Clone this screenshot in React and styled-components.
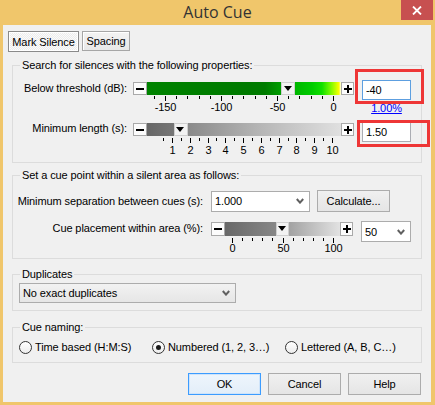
import React from "react"
import styled, { createGlobalStyle } from "styled-components"

const GlobalStyle = createGlobalStyle`
  html, body { margin: 0; padding: 0; }
  body {
    font-family: "Liberation Sans", Arial, sans-serif;
    font-size: 11px;
    letter-spacing: -0.1px;
    color: #000;
    background: #fff;
  }
  * { box-sizing: border-box; }
`

// tick scales under the sliders
const range = (from, to, step) => {
  const out = []
  for (let v = from; v <= to + 1e-9; v += step) out.push(Math.round(v * 100) / 100)
  return out
}

const Scale = ({ width, height, top, baseline, values, isMajor, toX }) => (
  <TickSvg width={width} height={height}>
    {values.map((v) => {
      const x = Math.round(toX(v)) + 0.5
      return (
        <line key={v} x1={x} x2={x} y1={top} y2={top + (isMajor(v) ? 5 : 3)} stroke="#000" />
      )
    })}
    {values.filter(isMajor).map((v) => (
      <text key={"t" + v} x={Math.round(toX(v)) + 0.5} y={baseline} textAnchor="middle">
        {v}
      </text>
    ))}
  </TickSvg>
)

const Slider = ({ width, height, thumbLeft, thumbW, track }) => (
  <SliderBox $w={width} $h={height}>
    <StepBtn $w={14} />
    <Track $bg={track}>
      <Thumb $w={thumbW} style={{ left: thumbLeft }} />
    </Track>
    <StepBtn $w={13} $plus />
  </SliderBox>
)

const Chevron = () => (
  <svg width="8" height="6" viewBox="0 0 8 6">
    <polyline points="0.8,1 4,4.6 7.2,1" fill="none" stroke="#606060" strokeWidth="2" />
  </svg>
)

const Combo = ({ children, w, h, flat }) => (
  <ComboBox $w={w} $h={h} $flat={flat}>
    <span>{children}</span>
    <Chevron />
  </ComboBox>
)

const thrX = (v) => 200 + 1.12 * v
const lenX = (v) => 39 + (v - 1) * 17.78
const cueX = (v) => 21 + 1.01 * v

const App = () => {
  return (
    <>
      <GlobalStyle />
      <Window>
        <TitleBar>
          <span />
          <Title>Auto Cue</Title>
          <Close>
            <svg width="10" height="9" viewBox="0 0 10 9">
              <path d="M1 0.5 L9 8.5 M9 0.5 L1 8.5" stroke="#fff" strokeWidth="1.8" />
            </svg>
          </Close>
        </TitleBar>
        <Client>
          <Tabs>
            <Tab $active $w={71}>Mark Silence</Tab>
            <Tab $w={48}>Spacing</Tab>
          </Tabs>

          <Group $mt={13} $h={98} $pad="14px 0 0 0">
            <Legend>Search for silences with the following properties:</Legend>
            <Row $h={42}>
              <RowLabel $w={114} $mt={2}>Below threshold (dB):</RowLabel>
              <SliderCol $w={221} $ml={6} $mt={2}>
                <Slider
                  width={221}
                  height={13}
                  thumbW={14}
                  thumbLeft={thrX(-40) - 14 - 7}
                  track="linear-gradient(to right, #008300 0px, #007a00 100px, #007c00 118px, #009a00 132px, #00b800 149px, #00cc00 165px, #10e000 175px, #70f800 183px, #c8ff00 189px, #ffff00 192px, #ffffff 194px)"
                />
                <Scale
                  width={221}
                  height={18}
                  top={1}
                  baseline={16}
                  values={range(-160, 0, 10)}
                  isMajor={(v) => v % 50 === 0}
                  toX={thrX}
                />
              </SliderCol>
              <FieldCol $ml={8}>
                <TextBox $focus defaultValue="-40" readOnly />
                <Link href="#">1.00%</Link>
                <Mark $l={-7} $t={-11} $w={69} $h={35} />
              </FieldCol>
            </Row>
            <Row>
              <RowLabel $w={114} $mt={0}>Minimum length (s):</RowLabel>
              <SliderCol $w={221} $ml={6} $mt={1}>
                <Slider
                  width={221}
                  height={13}
                  thumbW={14}
                  thumbLeft={lenX(1.5) - 14 - 7}
                  track="linear-gradient(to right, #666666 0px, #767676 27px, #8a8a8a 41px, #b4b4b4 110px, #e0e0e0 194px)"
                />
                <Scale
                  width={221}
                  height={20}
                  top={2}
                  baseline={18}
                  values={range(0.5, 10, 0.5)}
                  isMajor={(v) => Number.isInteger(v)}
                  toX={lenX}
                />
              </SliderCol>
              <FieldCol $ml={8}>
                <TextBox defaultValue="1.50" readOnly />
                <Mark $l={-5} $t={-2} $w={73} $h={27} />
              </FieldCol>
            </Row>
          </Group>

          <Group $mt={12} $h={84} $pad="14px 0 0 0">
            <Legend>Set a cue point within a silent area as follows:</Legend>
            <Row $h={22} $center>
              <RowLabel $w={190}>Minimum separation between cues (s):</RowLabel>
              <Spacer $w={8} />
              <Combo w={99} h={21}>1.000</Combo>
              <Spacer $w={7} />
              <Button $w={73}>Calculate...</Button>
            </Row>
            <Row $mt={9}>
              <RowLabel $w={190} $mt={1}>Cue placement within area (%):</RowLabel>
              <SliderCol $w={142} $ml={8} $mt={1}>
                <Slider
                  width={142}
                  height={14}
                  thumbW={13}
                  thumbLeft={cueX(50) - 14 - 6.5}
                  track="linear-gradient(to right, #686868 0px, #878787 51px, #a2a2a2 64px, #e2e2e2 115px)"
                />
                <Scale
                  width={142}
                  height={18}
                  top={2}
                  baseline={16}
                  values={range(0, 100, 10)}
                  isMajor={(v) => v % 50 === 0}
                  toX={cueX}
                />
              </SliderCol>
              <Spacer $w={8} />
              <Combo w={50} h={21}>50</Combo>
            </Row>
          </Group>

          <Group $mt={15} $h={37} $pad="8px 0 0 6px">
            <Legend>Duplicates</Legend>
            <Combo w={217} h={20} flat>No exact duplicates</Combo>
          </Group>

          <Group $mt={16} $h={36} $pad="12px 0 0 6px">
            <Legend>Cue naming:</Legend>
            <RadioRow>
              <RadioItem $w={133}>
                <RadioCircle />
                Time based (H:M:S)
              </RadioItem>
              <RadioItem $w={133}>
                <RadioCircle $on />
                Numbered (1, 2, 3…)
              </RadioItem>
              <RadioItem>
                <RadioCircle />
                Lettered (A, B, C…)
              </RadioItem>
            </RadioRow>
          </Group>

          <Buttons>
            <Button $w={73} $default>OK</Button>
            <Button $w={73}>Cancel</Button>
            <Button $w={73}>Help</Button>
          </Buttons>
        </Client>
      </Window>
    </>
  )
}
export default App

const Window = styled.div`
width:435px;
height:405px;
background:#f0c66b;
display:flex;
flex-direction:column;
overflow:hidden;
`
const TitleBar = styled.div`
height:25px;
flex:none;
display:grid;
grid-template-columns:1fr auto 1fr;
`
const Title = styled.div`
font-family:"Open Sans", "Noto Sans", sans-serif;
font-size:16px;
letter-spacing:0;
line-height:24px;
color:#333;
`
const Close = styled.div`
justify-self:end;
align-self:start;
width:32px;
height:20px;
margin-right:2px;
background:#c75050;
display:flex;
align-items:center;
justify-content:center;
`
const Client = styled.div`
flex:1;
margin:0 4px 3px 3px;
background:#f0f0f0;
padding:6px 0 0 5px;
display:flex;
flex-direction:column;
`
const Tabs = styled.div`
display:flex;
gap:3px;
height:21px;
align-items:flex-start;
`
const Tab = styled.div`
width:${p => p.$w}px;
height:${p => (p.$active ? 21 : 20)}px;
display:flex;
align-items:center;
justify-content:center;
border:1px solid ${p => (p.$active ? "#8a8a8a" : "#a6a6a6")};
background:${p =>
  p.$active
    ? "repeating-conic-gradient(#fbfbfb 0 25%, #ececec 0 50%) 0 0 / 2px 2px"
    : "linear-gradient(#f3f3f3, #e8e8e8)"};
box-shadow:${p => (p.$active ? "inset 0 0 0 1px #fff" : "inset 1px 1px 0 #fff")};
`
const Group = styled.div`
position:relative;
margin:${p => p.$mt}px 9px 0 4px;
height:${p => p.$h}px;
flex:none;
border:1px solid #dcdcdc;
padding:${p => p.$pad};
`
const Legend = styled.span`
position:absolute;
top:-7px;
left:7px;
padding:0 2px;
line-height:13px;
background:#f0f0f0;
`
const Row = styled.div`
display:flex;
align-items:${p => (p.$center ? "center" : "flex-start")};
height:${p => (p.$h ? p.$h + "px" : "auto")};
margin-top:${p => p.$mt || 0}px;
`
const RowLabel = styled.div`
width:${p => p.$w}px;
flex:none;
text-align:right;
line-height:13px;
white-space:nowrap;
margin-top:${p => p.$mt || 0}px;
`
const Spacer = styled.div`
width:${p => p.$w}px;
flex:none;
`
const SliderCol = styled.div`
width:${p => p.$w}px;
flex:none;
margin-left:${p => p.$ml}px;
margin-top:${p => p.$mt}px;
`
const SliderBox = styled.div`
width:${p => p.$w}px;
height:${p => p.$h}px;
display:flex;
`
const StepBtn = styled.div`
width:${p => p.$w}px;
flex:none;
position:relative;
background:#fcfcfc;
border:1px solid #a9a9a9;
&::before, &::after{
  content:"";
  position:absolute;
  background:#000;
  left:50%;
  top:50%;
}
&::before{
  width:8px;
  height:2px;
  margin:-1px 0 0 -4px;
}
&::after{
  display:${p => (p.$plus ? "block" : "none")};
  width:2px;
  height:8px;
  margin:-4px 0 0 -1px;
}
`
const Track = styled.div`
flex:1;
position:relative;
background:${p => p.$bg};
`
const Thumb = styled.div`
position:absolute;
top:0;
bottom:0;
width:${p => p.$w}px;
background:#f2f2f2;
border:1px solid #cfcfcf;
&::after{
  content:"";
  position:absolute;
  left:50%;
  top:3px;
  margin-left:-4.5px;
  border-left:4.5px solid transparent;
  border-right:4.5px solid transparent;
  border-top:5px solid #000;
}
`
const TickSvg = styled.svg`
display:block;
overflow:visible;
text{
  font-family:"Liberation Sans", Arial, sans-serif;
  font-size:11px;
  fill:#000;
}
`
const FieldCol = styled.div`
position:relative;
margin-left:${p => p.$ml}px;
width:49px;
display:flex;
flex-direction:column;
align-items:center;
`
const TextBox = styled.input`
width:49px;
height:20px;
font:inherit;
letter-spacing:inherit;
color:#000;
padding:0 3px;
margin:0;
border:1px solid ${p => (p.$focus ? "#5d9fe0" : "#abadb3")};
background:#fff;
outline:none;
`
const Link = styled.a`
margin-top:2px;
line-height:13px;
color:#0000ff;
text-decoration:underline;
`
const Mark = styled.div`
position:absolute;
left:${p => p.$l}px;
top:${p => p.$t}px;
width:${p => p.$w}px;
height:${p => p.$h}px;
border:3px solid #ee3636;
pointer-events:none;
z-index:2;
`
const ComboBox = styled.div`
width:${p => p.$w}px;
height:${p => p.$h}px;
flex:none;
display:flex;
align-items:center;
justify-content:space-between;
padding:0 5px 0 3px;
border:1px solid #acacac;
background:${p => (p.$flat ? "linear-gradient(#f2f2f2, #e6e6e6)" : "#fff")};
`
const Button = styled.div`
width:${p => p.$w}px;
height:22px;
flex:none;
display:flex;
align-items:center;
justify-content:center;
border:1px solid ${p => (p.$default ? "#3c9cff" : "#acacac")};
background:${p => (p.$default ? "linear-gradient(#eef5fc, #e3eef9)" : "linear-gradient(#f0f0f0, #e5e5e5)")};
${p => (p.$default ? "box-shadow: inset 0 0 0 1px #cfe4fa;" : "")}
`
const RadioRow = styled.div`
display:flex;
height:14px;
align-items:center;
`
const RadioItem = styled.label`
display:flex;
align-items:center;
gap:3px;
width:${p => (p.$w ? p.$w + "px" : "auto")};
white-space:nowrap;
`
const RadioCircle = styled.span`
width:13px;
height:13px;
flex:none;
border-radius:50%;
border:1px solid #333;
background:linear-gradient(#fff, #ececec);
display:flex;
align-items:center;
justify-content:center;
&::after{
  content:"";
  display:${p => (p.$on ? "block" : "none")};
  width:5px;
  height:5px;
  border-radius:50%;
  background:#1a1a1a;
}
`
const Buttons = styled.div`
display:flex;
justify-content:flex-end;
gap:7px;
margin-top:10px;
padding-right:10px;
`
